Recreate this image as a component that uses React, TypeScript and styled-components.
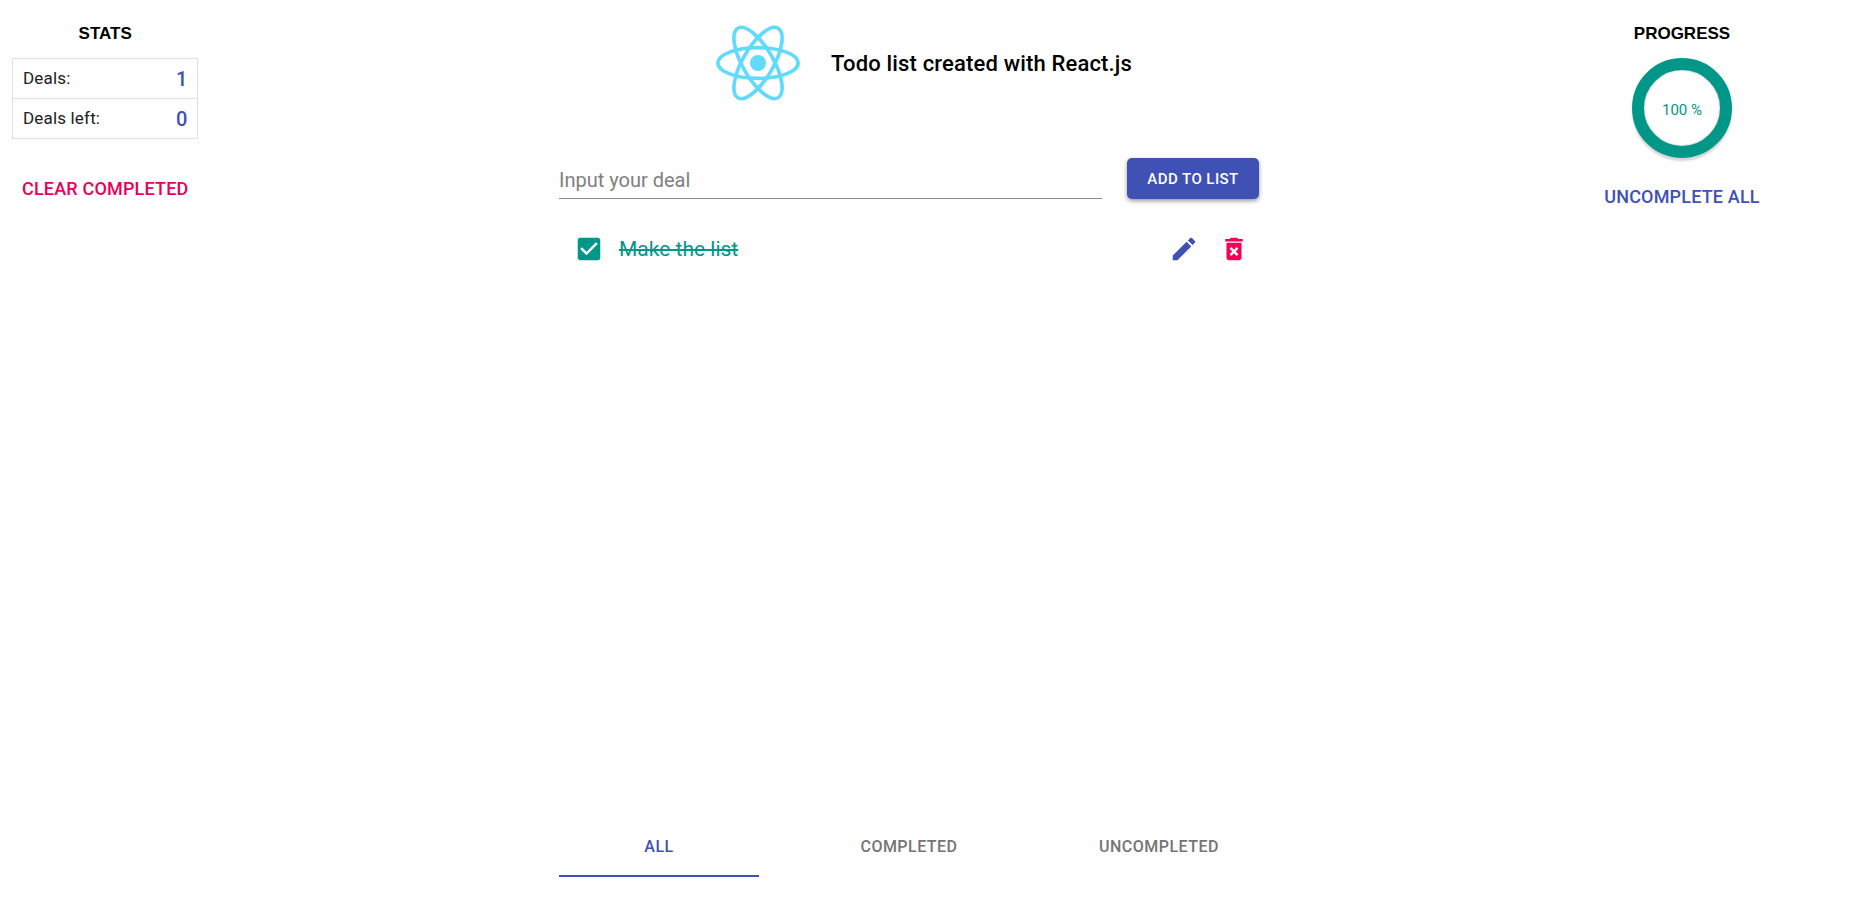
import React, { useState } from "react";
import styled, { createGlobalStyle } from "styled-components";

const indigo = "#3f51b5";
const teal = "#009688";
const pink = "#f50057";

const GlobalStyle = createGlobalStyle`
  * { box-sizing: border-box; }
  body {
    margin: 0;
    background: #fefefe;
    color: #000;
    font-family: Roboto, "Liberation Sans", sans-serif;
  }
  button, input { font-family: inherit; }
`;

const Page = styled.div`
  display: grid;
  grid-template-columns: 315px minmax(0, 1fr) 358px;
  min-height: 100vh;
`;

const Side = styled.aside<{ $align: string }>`
  display: flex;
  flex-direction: column;
  align-items: ${(p) => p.$align};
  padding: 24px 0 0;
`;

const StatsPanel = styled.div`
  display: flex;
  flex-direction: column;
  align-items: center;
  min-width: 186px;
  margin-left: 12px;
`;

const PanelTitle = styled.h2`
  margin: 0 0 14px;
  font: bold 17px/20px "Liberation Sans", Arial, sans-serif;
`;

const StatsTable = styled.table`
  width: 100%;
  border-collapse: collapse;
  margin-bottom: 27px;
`;

const StatsLabel = styled.th`
  height: 40px;
  padding: 0 10px 2px;
  border: 1px solid #e0e0e0;
  border-right: 0;
  color: #212121;
  font-size: 17px;
  font-weight: 400;
  letter-spacing: 0.01em;
  text-align: left;
`;

const StatsValue = styled.td`
  padding: 0 10px;
  border: 1px solid #e0e0e0;
  border-left: 0;
  color: ${indigo};
  font-size: 20px;
  font-weight: 500;
  text-align: right;
`;

const TextButton = styled.button<{ $color: string }>`
  height: 45px;
  padding: 0 10px;
  border: 0;
  background: none;
  color: ${(p) => p.$color};
  font-size: 18px;
  font-weight: 500;
  letter-spacing: 0.01em;
  white-space: nowrap;
  cursor: pointer;
`;

const Ring = styled.div`
  display: flex;
  align-items: center;
  justify-content: center;
  width: 100px;
  height: 100px;
  margin-bottom: 16px;
  padding-top: 4px;
  border: 12px solid ${teal};
  border-radius: 50%;
  box-shadow: 0 3px 2px rgba(0, 0, 0, 0.16), inset 0 0 2px rgba(0, 0, 0, 0.3);
  color: ${teal};
  font-size: 15px;
`;

const Main = styled.main`
  display: flex;
  flex-direction: column;
  width: 100%;
  max-width: 700px;
  min-height: 100vh;
  margin: 0 auto;
  padding: 25px 0 22px;
`;

const Header = styled.header`
  display: flex;
  align-items: center;
  justify-content: center;
  gap: 31px;
  padding-left: 30px;
`;

const Title = styled.h1`
  margin: 0;
  padding-top: 2px;
  font-size: 22px;
  font-weight: 500;
  line-height: 32px;
  letter-spacing: 0.0075em;
`;

const Form = styled.form`
  display: flex;
  gap: 25px;
  margin-top: 57px;
`;

const DealInput = styled.input`
  flex: 1;
  min-width: 0;
  height: 41px;
  padding: 4px 0 0;
  border: 0;
  border-bottom: 1px solid #8c8c8c;
  outline: 0;
  background: none;
  font-size: 20px;
  &::placeholder { color: #808080; opacity: 1; }
`;

const AddButton = styled.button`
  width: 132px;
  height: 41px;
  padding: 0;
  border: 0;
  border-radius: 5px;
  background: ${indigo};
  box-shadow: 0 2px 4px rgba(0, 0, 0, 0.4);
  color: #fff;
  font-size: 15px;
  font-weight: 500;
  letter-spacing: 0.03em;
  cursor: pointer;
`;

const List = styled.ul`
  flex: 1;
  margin: 20px 0 0;
  padding: 0;
  list-style: none;
`;

const Item = styled.li`
  display: flex;
  align-items: center;
  height: 60px;
  padding: 0 10px 0 15px;
`;

const DealLabel = styled.label<{ $done: boolean }>`
  display: flex;
  align-items: center;
  gap: 15px;
  margin-right: auto;
  color: ${(p) => (p.$done ? teal : "#212121")};
  font-size: 21px;
  text-decoration: ${(p) => (p.$done ? "line-through" : "none")};
  cursor: pointer;
`;

const CheckWrap = styled.span`
  position: relative;
  width: 30px;
  height: 30px;
`;

const Check = styled.input`
  position: absolute;
  inset: 0;
  width: 100%;
  height: 100%;
  margin: 0;
  opacity: 0;
  cursor: pointer;
`;

const Icon = styled.svg`
  display: block;
  width: 30px;
  height: 30px;
  fill: currentColor;
`;

const IconButton = styled.button<{ $color: string }>`
  display: flex;
  align-items: center;
  justify-content: center;
  width: 50px;
  height: 50px;
  padding: 0;
  border: 0;
  background: none;
  color: ${(p) => p.$color};
  cursor: pointer;
  & + & { margin-right: -10px; }
`;

const Tabs = styled.nav`
  display: flex;
  justify-content: space-between;
`;

const Tab = styled.button<{ $active: boolean }>`
  width: 200px;
  height: 60px;
  padding: 0;
  border: 0;
  border-bottom: 2px solid ${(p) => (p.$active ? indigo : "transparent")};
  background: none;
  color: ${(p) => (p.$active ? indigo : "#757575")};
  font-size: 16px;
  font-weight: 500;
  letter-spacing: 0.03em;
  cursor: pointer;
`;

const Logo = () => (
  <svg width="84" height="76" viewBox="-11.5 -10.4 23 20.8" fill="none" stroke="#61dafb" aria-hidden="true">
    <circle r="2.2" fill="#61dafb" stroke="none" />
    <ellipse rx="11" ry="4.2" />
    <ellipse rx="11" ry="4.2" transform="rotate(60)" />
    <ellipse rx="11" ry="4.2" transform="rotate(120)" />
  </svg>
);

const tabs = ["ALL", "COMPLETED", "UNCOMPLETED"];

export default function App() {
  const [done, setDone] = useState(true);
  const [tab, setTab] = useState("ALL");
  return (
    <>
      <GlobalStyle />
      <Page>
        <Side $align="flex-start">
          <StatsPanel>
            <PanelTitle>STATS</PanelTitle>
            <StatsTable>
              <tbody>
                <tr><StatsLabel scope="row">Deals:</StatsLabel><StatsValue>1</StatsValue></tr>
                <tr><StatsLabel scope="row">Deals left:</StatsLabel><StatsValue>{done ? 0 : 1}</StatsValue></tr>
              </tbody>
            </StatsTable>
            <TextButton $color="#e8005a">CLEAR COMPLETED</TextButton>
          </StatsPanel>
        </Side>
        <Main>
          <Header>
            <Logo />
            <Title>Todo list created with React.js</Title>
          </Header>
          <Form onSubmit={(e) => e.preventDefault()}>
            <DealInput aria-label="Input your deal" placeholder="Input your deal" />
            <AddButton type="submit">ADD TO LIST</AddButton>
          </Form>
          <List>
            <Item>
              <DealLabel $done={done}>
                <CheckWrap>
                  <Icon viewBox="0 0 24 24" aria-hidden="true">
                    <path d={done
                      ? "M19 3H5c-1.11 0-2 .9-2 2v14c0 1.1.89 2 2 2h14c1.11 0 2-.9 2-2V5c0-1.1-.89-2-2-2zm-9 14l-5-5 1.41-1.41L10 14.17l7.59-7.59L19 8l-9 9z"
                      : "M19 5v14H5V5h14m0-2H5c-1.1 0-2 .9-2 2v14c0 1.1.9 2 2 2h14c1.1 0 2-.9 2-2V5c0-1.1-.9-2-2-2z"} />
                  </Icon>
                  <Check type="checkbox" checked={done} onChange={() => setDone(!done)} />
                </CheckWrap>
                Make the list
              </DealLabel>
              <IconButton $color={indigo} aria-label="Edit">
                <Icon viewBox="0 0 24 24">
                  <path d="M3 17.25V21h3.75L17.81 9.94l-3.75-3.75L3 17.25zM20.71 7.04c.39-.39.39-1.02 0-1.41l-2.34-2.34c-.39-.39-1.02-.39-1.41 0l-1.83 1.83 3.75 3.75 1.83-1.83z" />
                </Icon>
              </IconButton>
              <IconButton $color={pink} aria-label="Delete">
                <Icon viewBox="0 0 24 24">
                  <path d="M6 19c0 1.1.9 2 2 2h8c1.1 0 2-.9 2-2V7H6v12zm2.46-7.12l1.41-1.41L12 12.59l2.12-2.12 1.41 1.41L13.41 14l2.12 2.12-1.41 1.41L12 15.41l-2.12 2.12-1.41-1.41L10.59 14l-2.13-2.12zM15.5 4l-1-1h-5l-1 1H5v2h14V4z" />
                </Icon>
              </IconButton>
            </Item>
          </List>
          <Tabs>
            {tabs.map((t) => (
              <Tab key={t} $active={t === tab} onClick={() => setTab(t)}>{t}</Tab>
            ))}
          </Tabs>
        </Main>
        <Side $align="center">
          <PanelTitle>PROGRESS</PanelTitle>
          <Ring>{done ? 100 : 0} %</Ring>
          <TextButton $color={indigo}>UNCOMPLETE ALL</TextButton>
        </Side>
      </Page>
    </>
  );
}
